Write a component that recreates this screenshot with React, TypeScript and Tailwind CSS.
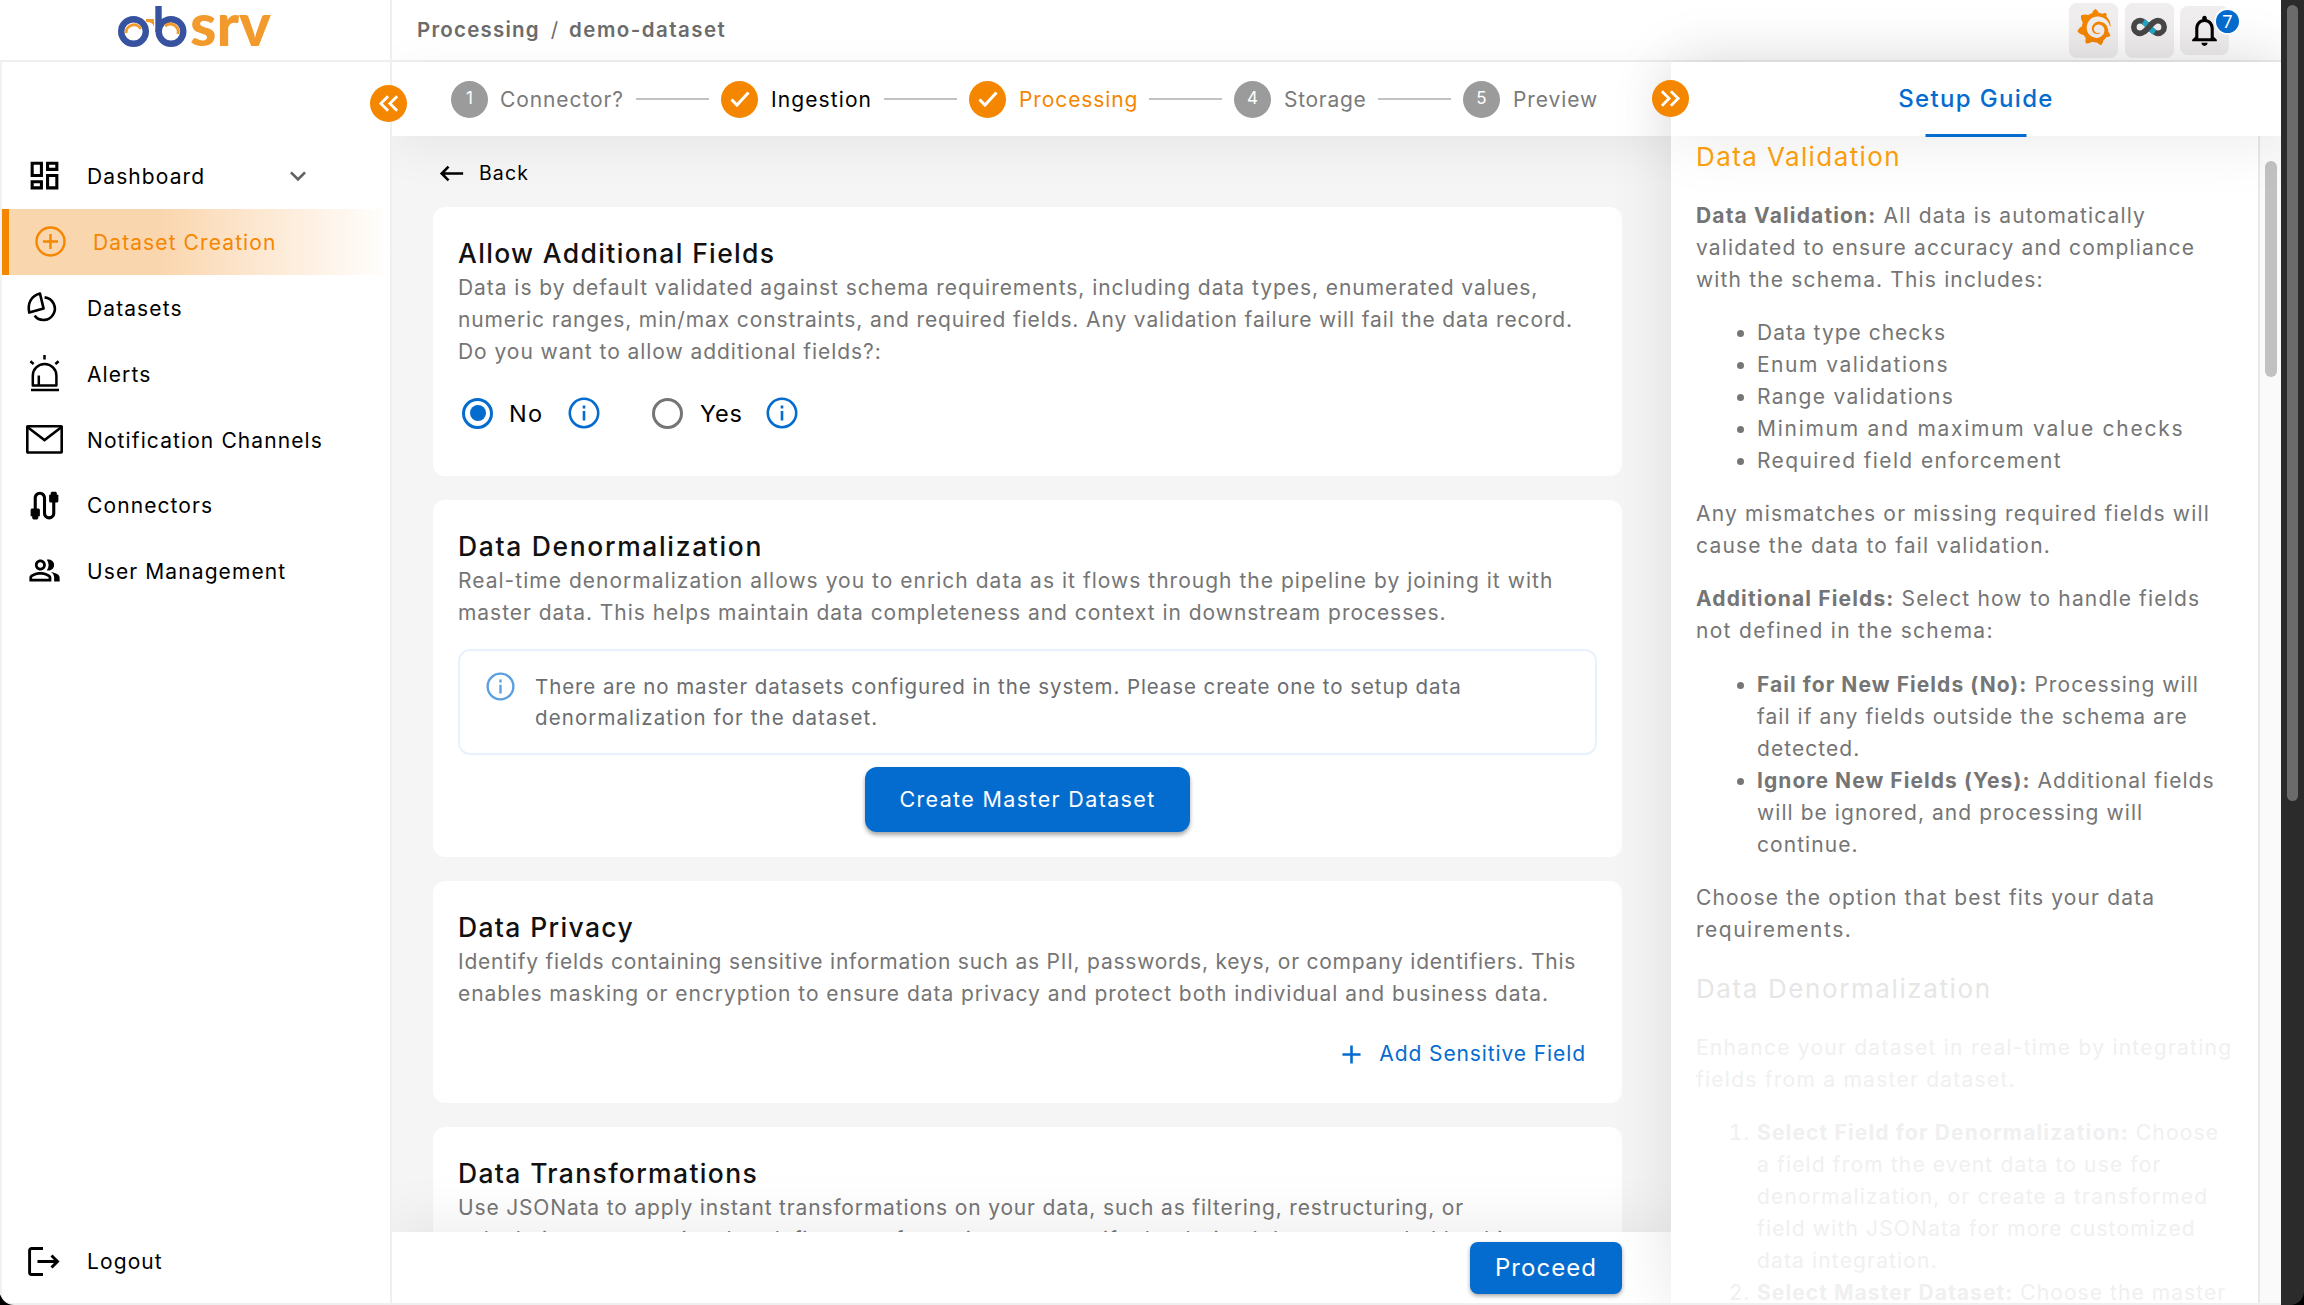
import React from 'react';
import {
  MdAdd,
  MdCable,
  MdKeyboardArrowDown,
  MdKeyboardBackspace,
  MdKeyboardDoubleArrowLeft,
  MdKeyboardDoubleArrowRight,
  MdNotificationsNone,
  MdOutlineDashboard,
  MdOutlinePeopleAlt,
} from 'react-icons/md';
import { SiGrafana } from 'react-icons/si';

const Logo = () => (
  <svg width="156" height="46" viewBox="0 0 156 46" fill="none">
    <circle cx="16.5" cy="26.5" r="12.3" stroke="#37539f" strokeWidth="6.4" />
    <path d="M9 28a8 8 0 0 1 15-4" stroke="#f39a2d" strokeWidth="3" />
    <circle cx="54" cy="26.5" r="12.3" stroke="#37539f" strokeWidth="6.4" />
    <path d="M41.5 1v26" stroke="#37539f" strokeWidth="6.4" />
    <path d="M48 21a8 8 0 0 1 13 8" stroke="#f39a2d" strokeWidth="3" />
    <path d="M29 14h8v8c-1-4-4-5-8-5z" fill="#f39a2d" />
    <text
      x="73"
      y="41"
      fill="#f39a2d"
      fontFamily="Lato, sans-serif"
      fontWeight="900"
      fontSize="59"
      textLength="81"
      lengthAdjust="spacingAndGlyphs"
    >
      srv
    </text>
  </svg>
);

const DatasetIcon = () => (
  <svg className="mr-[3px]" width="33" height="33" viewBox="0 0 33 33" fill="none" stroke="currentColor" strokeWidth="2.6" strokeLinejoin="round">
    <path d="M14 2.6 17.6 17.6 3.2 21.6C1.4 13 4.6 5 14 2.6z" />
    <path d="M18.6 6.4A11.3 11.3 0 1 1 8.6 24.6" />
  </svg>
);

const AlertIcon = () => (
  <svg width="33" height="38" viewBox="0 0 33 38" fill="none" stroke="currentColor" strokeWidth="2.5">
    <path d="M4.8 31.5V21.8a11.8 11.8 0 0 1 23.6 0v9.7z" strokeLinejoin="round" />
    <path d="M10.8 31v-9.5M3 36h28M16.5 1v4.5M2.4 7.2l3.2 2.8M30.6 7.2 27.4 10" />
  </svg>
);

const MailIcon = () => (
  <svg width="37" height="29" viewBox="0 0 37 29" fill="none" stroke="currentColor" strokeWidth="2.6">
    <rect x="1.3" y="1.3" width="34.4" height="26.2" rx="0.5" />
    <path d="M2 2.5 18.5 15 35 2.5" />
  </svg>
);

const LogoutIcon = () => (
  <svg width="32" height="29" viewBox="0 0 32 29" fill="none" stroke="currentColor" strokeWidth="2.9">
    <path d="M15 1.5H3.6a2 2 0 0 0-2 2v22a2 2 0 0 0 2 2H15" />
    <path d="M9.5 14.5h19M23.5 8.5l6 6-6 6" />
  </svg>
);

const PlusCircle = () => (
  <svg width="31" height="31" viewBox="0 0 31 31" fill="none" stroke="currentColor" strokeWidth="2.4">
    <circle cx="15.5" cy="15.5" r="14" />
    <path d="M15.5 8v15M8 15.5h15" />
  </svg>
);

const CheckIcon = () => (
  <svg width="22" height="18" viewBox="0 0 22 18" fill="none" stroke="currentColor" strokeWidth="3">
    <path d="M2.500 9.500 8 15 19.500 2.500" />
  </svg>
);

const InfoIcon = ({ size = 32 }: { size?: number }) => (
  <svg width={size} height={size} viewBox="0 0 32 32" fill="none" stroke="currentColor" strokeWidth="2.6">
    <circle cx="16" cy="16" r="14.2" />
    <path d="M16 14v9.6M16 8.4v3.2" />
  </svg>
);

const SupersetIcon = () => (
  <svg width="36" height="20" viewBox="0 0 36 20" fill="none" strokeWidth="5.6">
    <path
      d="M18 10C15 6.500 12.500 3.600 9.200 3.600a6.400 6.400 0 0 0 0 12.800C12.500 16.400 15 13.500 18 10s5.500-6.400 8.800-6.400a6.400 6.400 0 0 1 0 12.800C23.500 16.400 21 13.500 18 10z"
      stroke="#484848"
    />
    <path d="M12.300 4.600C14.500 5.900 16 7.700 18 10s3.500 4.100 5.700 5.400" stroke="#20a7c9" />
    <path d="M12.800 15.100C14.600 14 16.200 12.100 18 10s3.400-4 5.200-5.100" stroke="#484848" />
  </svg>
);

interface NavItem {
  label: string;
  icon: React.ReactNode;
  active?: boolean;
  expandable?: boolean;
}

const navItems: NavItem[] = [
  { label: 'Dashboard', icon: <MdOutlineDashboard size={37} />, expandable: true },
  { label: 'Dataset Creation', icon: <PlusCircle />, active: true },
  { label: 'Datasets', icon: <DatasetIcon /> },
  { label: 'Alerts', icon: <AlertIcon /> },
  { label: 'Notification Channels', icon: <MailIcon /> },
  { label: 'Connectors', icon: <MdCable size={37} /> },
  { label: 'User Management', icon: <MdOutlinePeopleAlt size={33} /> },
];

const Sidebar = () => (
  <aside className="relative z-20 flex w-[392px] shrink-0 flex-col border-r-2 border-[#efefef] bg-white">
    <div className="flex h-[62px] items-start justify-center border-b-2 border-[#efefef] pt-[5px]">
      <Logo />
    </div>
    <nav className="flex flex-1 flex-col border-l-2 border-[#f1f1f1] pt-[81px] text-[21px] tracking-[1.1px] text-black">
      {navItems.map((item) => (
        <div
          key={item.label}
          className={
            item.active
              ? 'flex h-[66px] items-center border-l-[7px] border-[#f58600] bg-linear-to-r from-[#fad6ae] from-40% to-white pl-[21px] text-[#f58600]'
              : 'flex h-[65.8px] items-center pl-[22px]'
          }
        >
          <span className="flex w-10 shrink-0 items-center justify-center">{item.icon}</span>
          <span className="ml-[23px] pt-[2px]">{item.label}</span>
          {item.expandable && <MdKeyboardArrowDown size={32} className="ml-[77px] text-[#616161]" />}
        </div>
      ))}
      <div className="mt-auto mb-[9px] flex h-[66px] items-center pl-[22px]">
        <span className="flex w-10 shrink-0 items-center justify-center">
          <LogoutIcon />
        </span>
        <span className="ml-[23px] pt-[1px]">Logout</span>
      </div>
    </nav>
    <button className="absolute top-[85px] right-[-17px] flex size-[37px] items-center justify-center rounded-full bg-[#f58600] text-white">
      <MdKeyboardDoubleArrowLeft size={33} />
    </button>
  </aside>
);

const Header = () => (
  <header className="flex h-[62px] shrink-0 items-center border-b-2 border-[#efefef] bg-white pr-[52px] pl-[25px]">
    <div className="flex pt-[1px] text-[20.5px] font-semibold whitespace-pre text-[#6b6b6b]">
      <span className="tracking-[1.2px]">Processing</span>
      <span className="mx-[11px] font-normal">/</span>
      <span className="tracking-[1.45px]">demo-dataset</span>
    </div>
    <div className="ml-auto flex items-center gap-[6.5px]">
      <div className="flex h-[55px] w-[49px] justify-center rounded-lg bg-[#f0eeef] pt-[6px]">
        <SiGrafana size={36} className="text-[#f58600]" />
      </div>
      <div className="flex h-[55px] w-[49px] justify-center rounded-lg bg-[#f0eeef] pt-[14px]">
        <SupersetIcon />
      </div>
      <div className="relative flex h-[49px] w-[49px] justify-center rounded-lg bg-[#f0eeef] pt-[6px]">
        <MdNotificationsNone size={37} className="text-black" />
        <span className="absolute top-[2px] right-[-12px] flex size-[27px] items-center justify-center rounded-full border-2 border-white bg-[#056ccf] font-['Noto_Sans',sans-serif] text-[18px] text-white">
          7
        </span>
      </div>
    </div>
  </header>
);

const StepLine = () => <div className="h-[2px] w-[73px] bg-[#c2c2c2]" />;

const StepDot = ({ n, done }: { n: number; done?: boolean }) => (
  <div
    className={
      done
        ? 'flex size-[37px] items-center justify-center rounded-full bg-[#f58600] text-white'
        : 'flex size-[37px] items-center justify-center rounded-full bg-[#9b9b9b] text-[17px] text-white'
    }
  >
    {done ? <CheckIcon /> : n}
  </div>
);

const Stepper = () => (
  <div className="relative z-10 flex h-[74px] shrink-0 items-center bg-white pl-[59px] text-[21px] whitespace-nowrap text-[#7a7a7a] shadow-[0_12px_50px_rgba(0,0,0,0.06)]">
    <StepDot n={1} />
    <span className="ml-[12px] w-[136px] pt-[1px] tracking-[0.9px]">Connector?</span>
    <StepLine />
    <div className="w-[12px]" />
    <StepDot n={2} done />
    <span className="ml-[13px] w-[113px] pt-[1px] tracking-[1.1px] text-black">Ingestion</span>
    <StepLine />
    <div className="w-[12px]" />
    <StepDot n={3} done />
    <span className="ml-[13px] w-[130px] pt-[1px] tracking-[0.9px] text-[#f58600]">Processing</span>
    <StepLine />
    <div className="w-[12px]" />
    <StepDot n={4} />
    <span className="ml-[13px] w-[94px] pt-[1px] tracking-[0.7px]">Storage</span>
    <StepLine />
    <div className="w-[12px]" />
    <StepDot n={5} />
    <span className="ml-[13px] pt-[1px] tracking-[0.9px]">Preview</span>
  </div>
);

const CardTitle = ({ children }: { children: React.ReactNode }) => (
  <h2 className="text-[26.5px] leading-[37px] font-medium tracking-[1.35px] text-[#111]">{children}</h2>
);

const CardText = ({ children }: { children: React.ReactNode }) => (
  <p className="text-[21px] leading-8 whitespace-nowrap text-[#757575]">{children}</p>
);

const ProcessingForm = () => (
  <div className="relative flex min-h-0 flex-1 flex-col overflow-hidden bg-[#f5f5f5] pr-[49px] pl-[41px]">
    <div className="flex h-[71px] shrink-0 items-center gap-[12px] pt-[4px] pl-[3px] text-[19.5px] text-black">
      <MdKeyboardBackspace size={31} />
      <span className="pt-[1px] tracking-[1.1px]">Back</span>
    </div>

    <section className="h-[269px] shrink-0 rounded-xl bg-white px-[25px] pt-[28px]">
      <CardTitle>Allow Additional Fields</CardTitle>
      <CardText>
        <span className="tracking-[0.95px]">
          Data is by default validated against schema requirements, including data types, enumerated values,
        </span>
        <br />
        <span className="tracking-[0.87px]">
          numeric ranges, min/max constraints, and required fields. Any validation failure will fail the data record.
        </span>
        <br />
        <span className="tracking-[0.95px]">Do you want to allow additional fields?:</span>
      </CardText>
      <div className="mt-[29px] flex h-8 items-center pl-[4px] text-[23.5px] text-black">
        <span className="flex size-[31px] items-center justify-center rounded-full border-[3px] border-[#056ccf]">
          <span className="size-[16px] rounded-full bg-[#056ccf]" />
        </span>
        <span className="ml-[16px] w-[59px] pt-[1px] tracking-[1.4px]">No</span>
        <span className="text-[#056ccf]">
          <InfoIcon />
        </span>
        <span className="ml-[52px] size-[31px] rounded-full border-[3px] border-[#757575]" />
        <span className="ml-[17px] w-[66px] pt-[1px] tracking-[0.8px]">Yes</span>
        <span className="text-[#056ccf]">
          <InfoIcon />
        </span>
      </div>
    </section>

    <section className="mt-[24px] h-[357px] shrink-0 rounded-xl bg-white px-[25px] pt-[28px]">
      <CardTitle>
        <span className="tracking-[1.65px]">Data Denormalization</span>
      </CardTitle>
      <CardText>
        <span className="tracking-[1.02px]">
          Real-time denormalization allows you to enrich data as it flows through the pipeline by joining it with
        </span>
        <br />
        <span className="tracking-[0.96px]">
          master data. This helps maintain data completeness and context in downstream processes.
        </span>
      </CardText>
      <div className="mt-[20px] flex h-[106px] rounded-xl border-2 border-[#e8f2fc] pt-[21px] pl-[26px]">
        <span className="text-[#5a9fe0]">
          <InfoIcon size={29} />
        </span>
        <p className="ml-[20px] text-[20.5px] leading-[30.5px] whitespace-nowrap text-[#6a6d70]">
          <span className="tracking-[0.92px]">
            There are no master datasets configured in the system. Please create one to setup data
          </span>
          <br />
          <span className="tracking-[1.1px]">denormalization for the dataset.</span>
        </p>
      </div>
      <button className="mx-auto mt-[12px] flex h-[65px] w-[325px] items-center justify-center rounded-xl bg-[#056ccf] text-[21.5px] tracking-[1.35px] text-white shadow-[0_3px_4px_rgba(0,0,0,0.35)]">
        Create Master Dataset
      </button>
    </section>

    <section className="mt-[24px] h-[222px] shrink-0 rounded-xl bg-white px-[25px] pt-[28px]">
      <CardTitle>Data Privacy</CardTitle>
      <CardText>
        <span className="tracking-[0.77px]">
          Identify fields containing sensitive information such as PII, passwords, keys, or company identifiers. This
        </span>
        <br />
        <span className="tracking-[0.96px]">
          enables masking or encryption to ensure data privacy and protect both individual and business data.
        </span>
      </CardText>
      <div className="mt-[28px] flex h-8 items-center justify-end pr-[11px] text-[#056ccf]">
        <MdAdd size={31} />
        <span className="ml-[12px] text-[21px] tracking-[0.9px]">Add Sensitive Field</span>
      </div>
    </section>

    <section className="mt-[24px] h-[222px] shrink-0 rounded-xl bg-white px-[25px] pt-[28px]">
      <CardTitle>Data Transformations</CardTitle>
      <CardText>
        <span className="tracking-[0.84px]">
          Use JSONata to apply instant transformations on your data, such as filtering, restructuring, or
        </span>
        <br />
        <span className="tracking-[0.84px]">
          calculating new metrics that define transformations, to specify the derived data, as needed by this
        </span>
      </CardText>
    </section>
  </div>
);

const Footer = () => (
  <footer className="relative z-10 flex h-[71px] shrink-0 items-start justify-end bg-white pt-[10px] pr-[49px] shadow-[0_-6px_60px_rgba(0,0,0,0.08)]">
    <button className="flex h-[52px] w-[152px] items-center justify-center rounded-lg bg-[#056ccf] text-[24px] tracking-[1.05px] text-white shadow-[0_2px_4px_rgba(0,0,0,0.35)]">
      Proceed
    </button>
  </footer>
);

const SetupGuide = () => (
  <div className="relative z-20 flex w-[610px] shrink-0 flex-col bg-white shadow-[0_0_60px_rgba(0,0,0,0.11)]">
    <button className="absolute top-[18px] left-[-19px] z-20 flex size-[37px] items-center justify-center rounded-full bg-[#f58600] text-white">
      <MdKeyboardDoubleArrowRight size={33} />
    </button>
    <div className="relative z-10 flex h-[74px] shrink-0 justify-center bg-white shadow-[0_8px_60px_rgba(0,0,0,0.08)]">
      <div className="flex items-center text-[24px] font-medium tracking-[1.35px] text-[#056ccf]">Setup Guide</div>
      <div className="absolute bottom-[-1px] left-1/2 h-[3px] w-[101px] -translate-x-1/2 bg-[#056ccf]" />
    </div>
    <div className="flex min-h-0 flex-1 overflow-hidden">
      <div className="flex-1 overflow-hidden pl-[25px] text-[21px] leading-8 tracking-[1.15px] whitespace-nowrap text-[#757575]">
        <h3 className="mt-[5px] text-[26px] leading-[32px] tracking-[1.4px] text-[#ffa20d]">Data Validation</h3>
        <p className="mt-[26.5px]">
          <b className="font-bold">Data Validation:</b> All data is automatically
          <br />
          validated to ensure accuracy and compliance
          <br />
          with the schema. This includes:
        </p>
        <ul className="mt-[21.3px] list-disc pl-[61px]">
          <li className="tracking-[1px]">Data type checks</li>
          <li className="tracking-[1.5px]">Enum validations</li>
          <li className="tracking-[1.3px]">Range validations</li>
          <li className="tracking-[1.73px]">Minimum and maximum value checks</li>
          <li className="tracking-[1.37px]">Required field enforcement</li>
        </ul>
        <p className="mt-[21.3px] tracking-[1.2px]">
          Any mismatches or missing required fields will
          <br />
          cause the data to fail validation.
        </p>
        <p className="mt-[21.3px]">
          <b className="font-bold">Additional Fields:</b> Select how to handle fields
          <br />
          <span className="tracking-[1.3px]">not defined in the schema:</span>
        </p>
        <ul className="mt-[21.3px] list-disc pl-[61px] tracking-[1.06px]">
          <li>
            <b className="font-bold">Fail for New Fields (No):</b> Processing will
            <br />
            fail if any fields outside the schema are
            <br />
            detected.
          </li>
          <li>
            <b className="font-bold">Ignore New Fields (Yes):</b> Additional fields
            <br />
            will be ignored, and processing will
            <br />
            continue.
          </li>
        </ul>
        <p className="mt-[21.3px]">
          Choose the option that best fits your data
          <br />
          <span className="tracking-[1.5px]">requirements.</span>
        </p>
        <h3 className="mt-[27px] text-[26px] leading-[32px] tracking-[1.6px] text-[#e6e6e6]">Data Denormalization</h3>
        <div className="text-[#f0f0f0]">
          <p className="mt-[27px] tracking-[1.25px]">
            Enhance your dataset in real-time by integrating
            <br />
            fields from a master dataset.
          </p>
          <ol className="mt-[21.3px] list-decimal pl-[61px]">
            <li>
              <b className="font-bold">Select Field for Denormalization:</b> Choose
              <br />
              a field from the event data to use for
              <br />
              denormalization, or create a transformed
              <br />
              field with JSONata for more customized
              <br />
              data integration.
            </li>
            <li className="tracking-[1.07px]">
              <b className="font-bold">Select Master Dataset:</b> Choose the master
            </li>
          </ol>
        </div>
      </div>
      <div className="flex w-[23px] shrink-0 justify-center border-l-2 border-[#e8e8e8] bg-[#fafafa] pt-[25px]">
        <div className="h-[216px] w-[12px] rounded-full bg-[#c1c1c1]" />
      </div>
    </div>
  </div>
);

export default function App() {
  return (
    <div className="flex h-[1305px] w-[2304px] overflow-hidden bg-black font-[Inter,sans-serif]">
      <div className="flex w-[2281px] overflow-hidden rounded-bl-[14px] border-b-2 border-[#efefef] bg-white">
        <Sidebar />
        <div className="flex min-w-0 flex-1 flex-col">
          <Header />
          <div className="flex min-h-0 flex-1">
            <main className="flex w-[1279px] shrink-0 flex-col">
              <Stepper />
              <ProcessingForm />
              <Footer />
            </main>
            <SetupGuide />
          </div>
        </div>
      </div>
      <div className="flex flex-1 justify-center rounded-br-[14px] bg-[#2b2b2b] pt-[5px]">
        <div className="h-[796px] w-[11px] rounded-full bg-[#6b6b6b]" />
      </div>
    </div>
  );
}
